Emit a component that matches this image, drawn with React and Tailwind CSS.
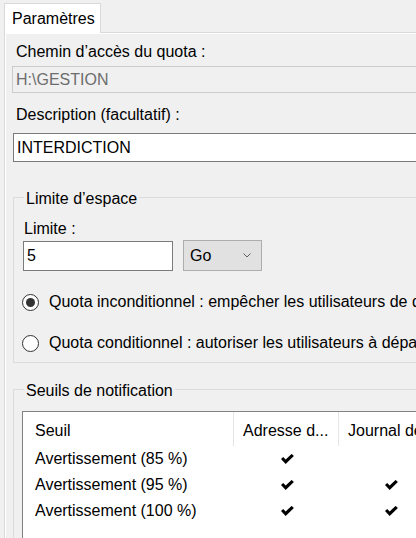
import React from "react";

function Check() {
  return (
    <svg width="13" height="10" viewBox="0 0 12 9" className="block">
      <path d="M0 4.5 L2 2.6 L4.3 4.9 L9.8 -0.2 L11.9 1.8 L4.3 9 Z" fill="#000" />
    </svg>
  );
}

function Radio({ checked }) {
  return (
    <div className="w-[17px] h-[17px] rounded-full border border-[#333] bg-white flex items-center justify-center shrink-0">
      {checked && <div className="w-[9px] h-[9px] rounded-full bg-[#333]" />}
    </div>
  );
}

export default function App() {
  const rows = [
    ["Avertissement (85 %)", true, false],
    ["Avertissement (95 %)", true, true],
    ["Avertissement (100 %)", true, true],
  ];
  return (
    <div className="w-[416px] h-[538px] overflow-hidden bg-[#f0f0f0] text-black text-[16px] leading-[18px] font-['Liberation_Sans',Arial,sans-serif]">
      {/* tab strip */}
      <div className="h-[32px] pl-[4px] pt-[3px] flex">
        <div className="w-[97px] h-[30px] bg-white border border-b-0 border-[#d9d9d9] pl-[7px] flex items-center">
          Paramètres
        </div>
      </div>
      {/* panel */}
      <div className="w-[720px] ml-[4px] border-t border-l border-[#d9d9d9]">
        <div className="border-t border-l border-white flex flex-col items-start">
          <div className="mt-[9px] ml-[10px]">Chemin d’accès du quota :</div>
          <div className="mt-[5px] ml-[6px] w-[700px] h-[27px] border border-[#cccccc] bg-[#f0f0f0] pl-[3px] flex items-center text-[#6d6d6d]">
            H:\GESTION
          </div>
          <div className="mt-[13px] ml-[10px]">Description (facultatif) :</div>
          <div className="mt-[9px] ml-[7px] w-[700px] h-[29px] border border-[#7a7a7a] bg-white pl-[3px] flex items-center">
            INTERDICTION
          </div>

          {/* group 1 */}
          <div className="mt-[35px] ml-[7px] w-[700px] h-[166px] border border-[#dcdcdc] flex flex-col items-start">
            <div className="-mt-[8px] ml-[10px] px-[2px] bg-[#f0f0f0]">Limite d’espace</div>
            <div className="mt-[12px] ml-[10px]">Limite :</div>
            <div className="mt-[2px] ml-[9px] flex items-end gap-[10px]">
              <div className="w-[150px] h-[30px] border border-[#7a7a7a] bg-white pl-[3px] flex items-center">5</div>
              <div className="w-[79px] h-[31px] border border-[#adadad] bg-[#e1e1e1] pl-[6px] pr-[10px] flex items-center justify-between">
                <span>Go</span>
                <svg width="8" height="5" viewBox="0 0 8 5" className="block">
                  <polyline points="0.5,0.5 4,4 7.5,0.5" fill="none" stroke="#606060" strokeWidth="1" />
                </svg>
              </div>
            </div>
            <div className="mt-[21px] ml-[8px] h-[20px] flex items-center gap-[10px] whitespace-nowrap">
              <Radio checked />
              <span>Quota inconditionnel : empêcher les utilisateurs de dépasser la limite</span>
            </div>
            <div className="mt-[21px] ml-[8px] h-[20px] flex items-center gap-[10px] whitespace-nowrap">
              <Radio />
              <span>Quota conditionnel : autoriser les utilisateurs à dépasser la limite</span>
            </div>
          </div>

          {/* group 2 */}
          <div className="mt-[26px] ml-[7px] w-[700px] h-[200px] border border-[#dcdcdc] flex flex-col items-start">
            <div className="-mt-[8px] ml-[10px] px-[2px] bg-[#f0f0f0]">Seuils de notification</div>
            <div className="mt-[11px] ml-[8px] w-[600px] h-[200px] border border-[#828282] bg-white">
              <div className="h-[34px] flex whitespace-nowrap">
                <div className="w-[211px] border-r border-[#e5e5e5] pl-[12px] pt-[4px] flex items-center">Seuil</div>
                <div className="w-[105px] border-r border-[#e5e5e5] pl-[9px] pt-[4px] flex items-center">Adresse d...</div>
                <div className="w-[150px] pl-[9px] pt-[4px] flex items-center">Journal des événements</div>
              </div>
              {rows.map(([label, a, b]) => (
                <div key={label} className="h-[26px] flex items-center whitespace-nowrap">
                  <div className="w-[211px] pl-[12px]">{label}</div>
                  <div className="w-[105px] flex justify-center pl-[1px]">{a && <Check />}</div>
                  <div className="w-[105px] flex justify-center">{b && <Check />}</div>
                </div>
              ))}
            </div>
          </div>
        </div>
      </div>
    </div>
  );
}
